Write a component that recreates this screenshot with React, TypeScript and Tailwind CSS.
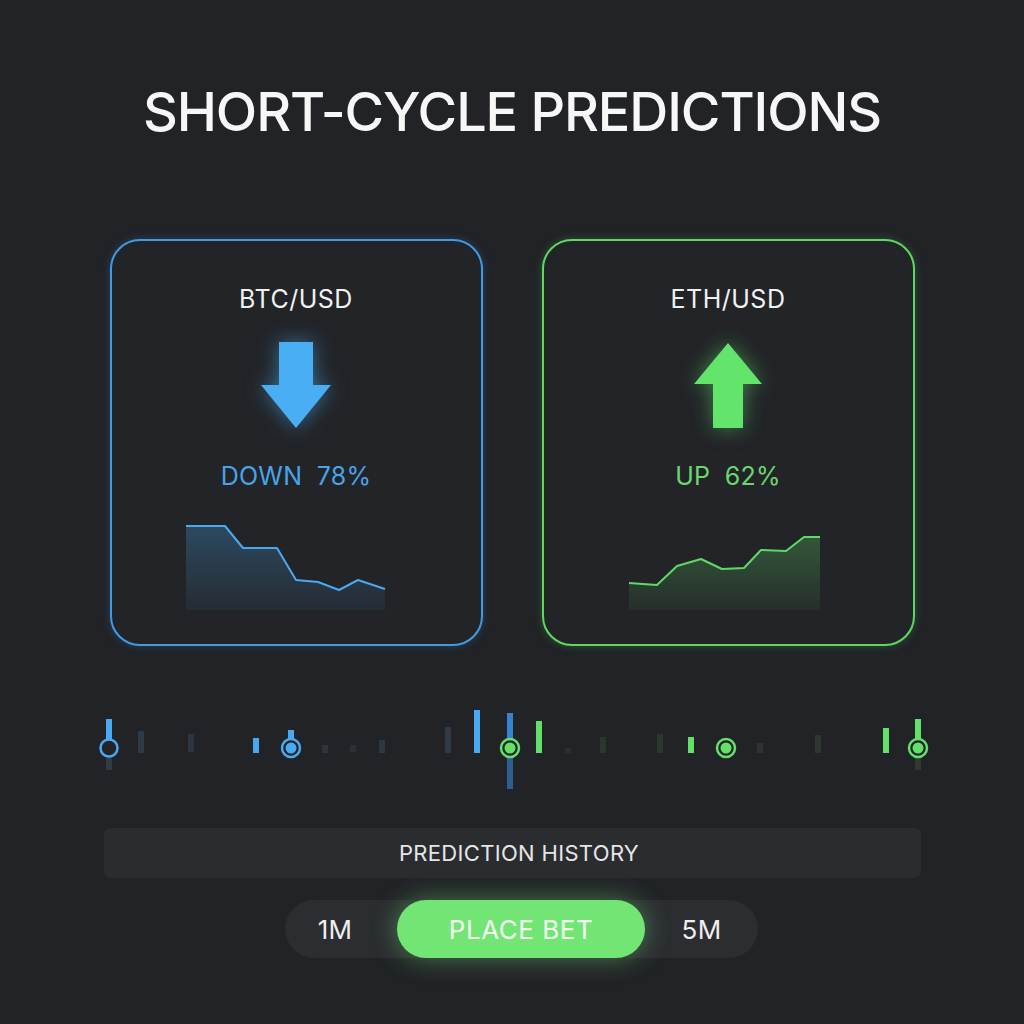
import { ReactNode } from 'react';

const FONT = { fontFamily: 'Inter, "Noto Sans", sans-serif' };

type Tone = 'blue' | 'green';

const DownArrow = () => (
  <svg width="70" height="86" viewBox="0 0 70 86" className="drop-shadow-[0_0_10px_rgba(74,174,245,0.55)]">
    <path d="M18 0 H52 V43 H70 L35 86 L0 43 H18 Z" fill="#4aaef5" />
  </svg>
);

const UpArrow = () => (
  <svg width="68" height="85" viewBox="0 0 68 85" className="drop-shadow-[0_0_10px_rgba(98,227,106,0.5)]">
    <path d="M34 0 L68 41 H49 V85 H19 V41 H0 Z" fill="#63e46b" />
  </svg>
);

// little area charts inside each card, coords are local to the svg box
const downLine: [number, number][] = [
  [0, 1], [39, 1], [57, 23], [91, 23], [110, 55], [132, 57], [153, 65], [172, 55], [199, 64],
];
const upLine: [number, number][] = [
  [0, 46], [28, 48], [48, 29], [72, 22], [93, 32], [115, 31], [132, 13], [157, 14], [175, 0], [191, 0],
];

const Spark = ({ pts, w, h, color, id }: { pts: [number, number][]; w: number; h: number; color: string; id: string }) => {
  const line = pts.map(([x, y]) => `${x},${y + 1}`).join(' ');
  const area = `0,${h} ${line} ${pts[pts.length - 1][0]},${h}`;
  return (
    <svg width={w} height={h} viewBox={`0 0 ${w} ${h}`} className="block">
      <defs>
        <linearGradient id={id} x1="0" y1="0" x2="0" y2="1">
          <stop offset="0" stopColor={color} stopOpacity="0.28" />
          <stop offset="1" stopColor={color} stopOpacity="0.06" />
        </linearGradient>
      </defs>
      <polygon points={area} fill={`url(#${id})`} />
      <polyline points={line} fill="none" stroke={color} strokeWidth="2" strokeLinejoin="round" />
    </svg>
  );
};

const PairCard = ({ tone, pair, label, arrow, chart }: { tone: Tone; pair: string; label: string; arrow: ReactNode; chart: ReactNode }) => (
  <div
    className={`flex h-[407px] w-[373px] flex-col items-center rounded-[30px] border-2 bg-[#222428] ${
      tone === 'blue'
        ? 'border-[#3f9be6] shadow-[0_0_8px_rgba(63,155,230,0.25)]'
        : 'border-[#5cd961] shadow-[0_0_8px_rgba(92,217,97,0.25)]'
    }`}
  >
    <div className="mt-[44px] text-[25px] leading-7 tracking-[0.02em] text-[#f1f1f1]">{pair}</div>
    <div className="mt-[29px] flex h-[86px] items-end">{arrow}</div>
    <div
      className={`mt-[34px] whitespace-pre text-[25px] leading-7 tracking-[0.01em] ${
        tone === 'blue' ? 'text-[#47a5e8]' : 'text-[#6bd66e]'
      }`}
    >
      {label}
    </div>
    {chart}
  </div>
);

// timeline strip: ticks, marker handles and signal bars
type Tick = { x: number; y1: number; y2: number; c: string };
const ticks: Tick[] = [
  { x: 141, y1: 731, y2: 753, c: '#2e3a46' },
  { x: 191, y1: 734, y2: 752, c: '#2d3640' },
  { x: 256, y1: 738, y2: 753, c: '#47a8ef' },
  { x: 325, y1: 745, y2: 753, c: '#2c343d' },
  { x: 353, y1: 745, y2: 752, c: '#2a3038' },
  { x: 382, y1: 740, y2: 753, c: '#2e3842' },
  { x: 448, y1: 727, y2: 753, c: '#2f3a46' },
  { x: 477, y1: 710, y2: 753, c: '#4aa9f0' },
  { x: 539, y1: 721, y2: 753, c: '#62e06a' },
  { x: 568, y1: 748, y2: 753, c: '#2a302b' },
  { x: 603, y1: 737, y2: 753, c: '#2c352e' },
  { x: 660, y1: 734, y2: 753, c: '#2c352e' },
  { x: 691, y1: 737, y2: 753, c: '#62e06a' },
  { x: 760, y1: 743, y2: 753, c: '#2c352e' },
  { x: 818, y1: 735, y2: 753, c: '#2d372f' },
  { x: 886, y1: 728, y2: 753, c: '#62e06a' },
];

const Timeline = () => {
  const top = 700;
  return (
    <svg width="1024" height="92" viewBox={`0 ${top} 1024 92`} className="block">
      {ticks.map((t, i) => (
        <rect key={i} x={t.x - 3} y={t.y1} width={6} height={t.y2 - t.y1} fill={t.c} />
      ))}
      {/* blue hollow handle */}
      <rect x="106" y="719" width="6" height="22" fill="#4aa9f0" />
      <rect x="106" y="756" width="6" height="14" fill="#2f3b48" />
      <circle cx="109" cy="748" r="8.5" fill="#222428" stroke="#4aa9f0" strokeWidth="2.5" />
      {/* blue filled handle */}
      <rect x="288" y="730" width="6" height="10" fill="#4aa9f0" />
      <circle cx="291" cy="748" r="9" fill="#222428" stroke="#4aa9f0" strokeWidth="2.5" />
      <circle cx="291" cy="748" r="5.5" fill="#4aa9f0" />
      {/* crossover marker */}
      <rect x="507" y="713" width="6" height="76" fill="#2d5f93" />
      <rect x="507" y="713" width="6" height="26" fill="#3783d3" />
      <circle cx="510" cy="748" r="9" fill="#222428" stroke="#62e06a" strokeWidth="2.5" />
      <circle cx="510" cy="748" r="5.5" fill="#62e06a" />
      {/* green handles */}
      <circle cx="726" cy="748" r="9" fill="#222428" stroke="#62e06a" strokeWidth="2.5" />
      <circle cx="726" cy="748" r="5.5" fill="#62e06a" />
      <rect x="915" y="719" width="6" height="22" fill="#62e06a" />
      <rect x="915" y="756" width="6" height="14" fill="#2f3b31" />
      <circle cx="918" cy="748" r="9" fill="#222428" stroke="#62e06a" strokeWidth="2.5" />
      <circle cx="918" cy="748" r="5.5" fill="#62e06a" />
    </svg>
  );
};

export default function App() {
  return (
    <div style={FONT} className="flex min-h-[1024px] w-full flex-col items-center bg-[#212327] text-white">
      <h1 className="mt-[80px] text-[54px] font-medium leading-[64px] tracking-[-0.02em] text-[#f7f7f7]">
        SHORT-CYCLE PREDICTIONS
      </h1>

      <div className="mt-[95px] flex gap-[59px]">
        <PairCard
          tone="blue"
          pair="BTC/USD"
          label="DOWN  78%"
          arrow={<DownArrow />}
          chart={
            <div className="mr-[21px] mt-[34px]">
              <Spark pts={downLine} w={200} h={86} color="#4aa9f0" id="btcFill" />
            </div>
          }
        />
        <PairCard
          tone="green"
          pair="ETH/USD"
          label="UP  62%"
          arrow={<UpArrow />}
          chart={
            <div className="mr-[6px] mt-[46px]">
              <Spark pts={upLine} w={192} h={74} color="#5fd966" id="ethFill" />
            </div>
          }
        />
      </div>

      <div className="mt-[54px]">
        <Timeline />
      </div>

      <div className="mt-[36px] flex h-[50px] w-[817px] items-center justify-center rounded-md bg-[#2a2c30] pl-[14px] text-[22px] tracking-[0.015em] text-[#e6e6e6]">
        PREDICTION HISTORY
      </div>

      <div className="ml-[19px] mt-[22px] flex h-[58px] w-[473px] items-center rounded-full bg-[#2b2d31] text-[26px] tracking-[0.01em] text-[#eeeeee]">
        <span className="w-[100px] text-center">1M</span>
        <button className="ml-[12px] h-[58px] w-[248px] rounded-full bg-[#73e574] tracking-[0.02em] text-[#f4fff4] shadow-[0_0_26px_rgba(115,229,116,0.45)]">
          PLACE BET
        </button>
        <span className="flex-1 text-center">5M</span>
      </div>
    </div>
  );
}
